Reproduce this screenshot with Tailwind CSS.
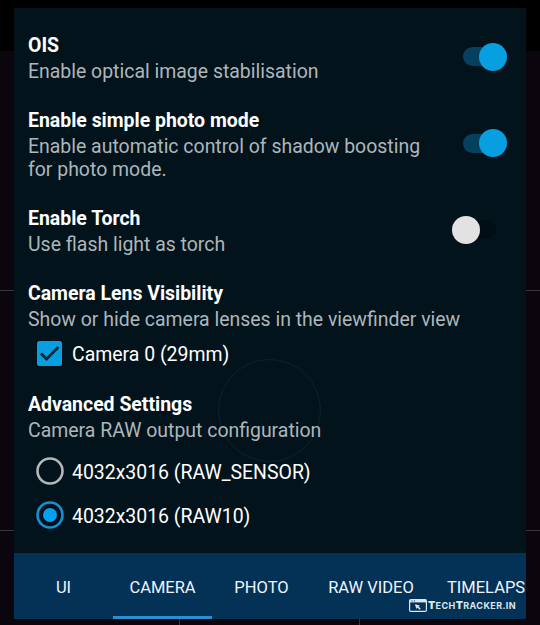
<!DOCTYPE html>
<html lang="en">
<head>
<meta charset="utf-8">
<title>Camera settings</title>
<script src="https://cdn.jsdelivr.net/npm/@tailwindcss/browser@4"></script>
</head>
<body class="w-[540px] h-[625px] overflow-hidden bg-[#0b060d] font-[Roboto,sans-serif]">
<div class="relative w-[540px] h-[625px] overflow-hidden px-[14px] pt-2">
  <!-- viewfinder backdrop: black top bar and grid lines -->
  <div class="absolute inset-x-0 top-0 h-[51px] bg-black"></div>
  <div class="absolute inset-x-0 top-[290px] h-px bg-[#39363b]"></div>
  <div class="absolute inset-x-0 top-[530px] h-px bg-[#39363b]"></div>
  <div class="absolute left-[179px] top-[616px] w-px h-[9px] bg-[#39363b]"></div>
  <div class="absolute left-[359px] top-[616px] w-px h-[9px] bg-[#39363b]"></div>

  <main class="relative flex flex-col h-[545px] bg-[#02131c] px-[14px] pt-6 text-[19.45px] leading-[23px] text-[#aeb6ba] whitespace-nowrap">
    <div class="absolute left-[204px] top-[351px] size-[103px] rounded-full border border-[#0f222a]"></div>
    <section class="relative flex justify-between h-[75px]">
      <div>
        <h2 class="leading-[28px] font-bold text-white">OIS</h2>
        <p>Enable optical image stabilisation</p>
      </div>
      <div class="relative mt-[15px] mr-[5px] w-[44px] h-[19px] rounded-full bg-[#05405e]"><i class="absolute -top-[4.5px] right-0 size-7 rounded-full bg-[#079fdf]"></i></div>
    </section>
    <section class="relative flex justify-between h-[98px]">
      <div>
        <h2 class="leading-[28px] font-bold text-white">Enable simple photo mode</h2>
        <p>Enable automatic control of shadow boosting<br>for photo mode.</p>
      </div>
      <div class="relative mt-[27px] mr-[5px] w-[44px] h-[19px] rounded-full bg-[#05405e]"><i class="absolute -top-[5px] right-0 size-7 rounded-full bg-[#079fdf]"></i></div>
    </section>
    <section class="relative flex justify-between h-[75px]">
      <div>
        <h2 class="leading-[28px] font-bold text-white">Enable Torch</h2>
        <p>Use flash light as torch</p>
      </div>
      <div class="relative mt-[15px] mr-[16px] w-[44px] h-[19px] rounded-full bg-[#020e15]"><i class="absolute -top-[4px] left-0 size-7 rounded-full bg-[#e3e2e2]"></i></div>
    </section>
    <section class="relative h-[111px]">
      <h2 class="leading-[28px] font-bold text-white">Camera Lens Visibility</h2>
      <p>Show or hide camera lenses in the viewfinder view</p>
      <div class="flex items-center gap-[10px] mt-2 pl-[9px] h-[29px] text-white">
        <svg class="size-[25px]" viewBox="0 0 25 25"><rect width="25" height="25" rx="2.5" fill="#079fdf"/><path d="M4 12.5l5.5 5.5L21.5 6" fill="none" stroke="#03263a" stroke-width="2.8"/></svg>
        <span class="pt-0.5">Camera 0 (29mm)</span>
      </div>
    </section>
    <section class="relative">
      <h2 class="leading-[28px] font-bold text-white">Advanced Settings</h2>
      <p>Camera RAW output configuration</p>
      <div class="flex items-center gap-2 mt-[7px] pl-2 h-11 text-white">
        <svg class="size-7" viewBox="0 0 28 28"><circle cx="14" cy="14" r="12.5" fill="none" stroke="#b3b8bb" stroke-width="2.6"/></svg>
        <span class="pt-0.5">4032x3016 (RAW_SENSOR)</span>
      </div>
      <div class="flex items-center gap-2 pl-2 h-11 text-white">
        <svg class="size-7" viewBox="0 0 28 28"><circle cx="14" cy="14" r="12.5" fill="none" stroke="#178fd0" stroke-width="2.6"/><circle cx="14" cy="14" r="7" fill="#079fef"/></svg>
        <span class="pt-0.5">4032x3016 (RAW10)</span>
      </div>
    </section>
  </main>

  <nav class="relative flex h-[66px] overflow-hidden bg-[#043156] text-[16.5px] leading-[69px] text-[#eef5f9] whitespace-nowrap">
    <div class="w-[99px] text-center shrink-0">UI</div>
    <div class="w-[99px] text-center shrink-0 border-b-[3px] border-[#2a8fd0]">CAMERA</div>
    <div class="w-[99px] text-center shrink-0">PHOTO</div>
    <div class="w-[120px] text-center shrink-0">RAW VIDEO</div>
    <div class="pl-4 shrink-0">TIMELAPS</div>
  </nav>

  <!-- site watermark -->
  <div class="absolute left-[409px] top-[598px] flex items-center gap-px h-[14px] text-[#dce6ee] whitespace-nowrap">
    <svg class="w-[18px] h-[13px]" viewBox="0 0 18 13"><rect x=".6" y=".6" width="16.8" height="11.8" rx="1.2" fill="none" stroke="currentColor" stroke-width="1.2"/><path d="M1 1h16v2.4H1z" fill="currentColor"/><path d="M2.5 2h1M5 2h1" stroke="#043156"/><path d="M6 5.3l5 1.2-1.4 1 2.2 2.2-1.2 1.1-2.2-2.2-1.1 1.3z" fill="currentColor"/></svg>
    <span class="font-[Inter,sans-serif] font-bold text-[9px] leading-[14px] pt-0.5 tracking-[0.4px]"><b class="text-[10.5px]">T</b>ECH<b class="text-[10.5px]">T</b>RACKER.IN</span>
  </div>
</div>
</body>
</html>
